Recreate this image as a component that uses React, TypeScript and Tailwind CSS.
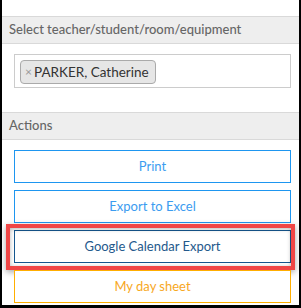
import React from 'react';

const actions = [
    { label: 'Print', cls: 'border-[#1e96f0] text-[#3b9cf0]' },
    { label: 'Export to Excel', cls: 'border-[#1e96f0] text-[#3b9cf0]' },
    { label: 'Google Calendar Export', cls: 'border-[#15578f] text-[#24598c]', marked: true },
    { label: 'My day sheet', cls: 'border-[#ffae00] text-[#f7a81e]' },
];

const SectionHeader: React.FC<{ title: string }> = ({ title }) => (
    <div className="h-[28px] flex items-center px-[7px] bg-[#eeeeee] border-y border-[#d9d9d9] text-[13px] font-medium text-[#666666]">
        {title}
    </div>
);

const App: React.FC = () => {
    return (
        <div className="w-[301px] h-[308px] bg-white border-x-2 border-b-[3px] border-black font-['Lato',sans-serif] flex flex-col">
            <div className="h-[16px]" />
            <SectionHeader title="Select teacher/student/room/equipment" />

            {/* selected people */}
            <div className="pl-[12px] pr-[8px] pt-[10px]">
                <div className="h-[34px] border border-[#cccccc] pl-[5px] pt-[3px]">
                    <span className="inline-flex items-center h-[24px] pl-[4px] pr-[6px] bg-[#e6e6e6] border border-[#aaaaaa] rounded-[4px] text-[13.5px] text-[#333333]">
                        <span className="text-[#999999] text-[12px] mr-[2px]">×</span>
                        PARKER, Catherine
                    </span>
                </div>
            </div>

            <div className="h-[24px]" />
            <SectionHeader title="Actions" />

            <div className="pl-[12px] pr-[8px] pt-[10px] flex flex-col gap-[7px]">
                {actions.map((a) => (
                    <div key={a.label} className="relative">
                        <button className={`w-full h-[33px] border-[1.5px] bg-white text-[13px] flex items-center justify-center ${a.cls}`}>
                            {a.label}
                        </button>
                        {a.marked && (
                            <div className="absolute left-[-8px] right-[-4px] top-[-6px] bottom-[-7px] border-4 border-[#f04646] shadow-[0_2px_6px_rgba(0,0,0,0.35),inset_0_1px_4px_rgba(0,0,0,0.3)] pointer-events-none" />
                        )}
                    </div>
                ))}
            </div>
        </div>
    );
};

export default App;
